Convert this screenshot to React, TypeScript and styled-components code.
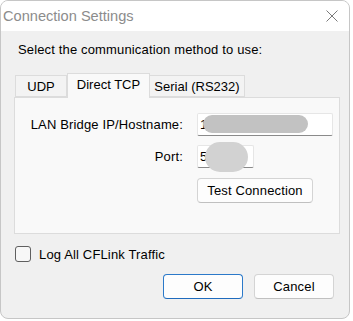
import styled, { createGlobalStyle } from 'styled-components';

const GlobalStyle = createGlobalStyle`
  html, body {
    margin: 0;
    padding: 0;
    background: #ffffff;
  }
  body {
    font-family: 'Liberation Sans', Arial, sans-serif;
    color: #000;
  }
`;

const Window = styled.div`
  width: 350px;
  height: 319px;
  box-sizing: border-box;
  border: 1px solid #c6c6c6;
  border-radius: 8px;
  overflow: hidden;
  background: #f0f0f0;
  display: flex;
  flex-direction: column;
`;

const TitleBar = styled.div`
  height: 30px;
  background: #ffffff;
  display: flex;
  align-items: center;
  justify-content: space-between;
  padding: 0 11px 0 2px;
  flex-shrink: 0;
`;

const Title = styled.span`
  font-size: 14.6px;
  color: #8c8c8c;
`;

const Body = styled.div`
  display: flex;
  flex-direction: column;
  padding: 11px 9px 0 13px;
  font-size: 13px;
  letter-spacing: 0.15px;
`;

const Prompt = styled.div`
  line-height: 16px;
  padding-left: 4px;
`;

const TabRow = styled.div`
  display: flex;
  align-items: flex-end;
  height: 24px;
  margin-top: 15px;
  padding-left: 1px;
  position: relative;
  z-index: 1;
`;

const Tab = styled.div<{ $active?: boolean; $w: number }>`
  width: ${(p) => p.$w}px;
  box-sizing: border-box;
  height: ${(p) => (p.$active ? 25 : 22)}px;
  margin-bottom: ${(p) => (p.$active ? -1 : 0)}px;
  background: ${(p) => (p.$active ? '#f9f9f9' : '#f3f3f3')};
  border: 1px solid #dcdcdc;
  border-bottom: ${(p) => (p.$active ? 'none' : '1px solid #dcdcdc')};
  ${(p) => (!p.$active ? 'border-left: none;' : '')}
  &:first-child {
    border-left: 1px solid #dcdcdc;
  }
  display: flex;
  align-items: center;
  justify-content: center;
  padding-bottom: ${(p) => (p.$active ? 3 : 0)}px;
  letter-spacing: 0;
`;

const Panel = styled.div`
  height: 137px;
  box-sizing: border-box;
  background: #f9f9f9;
  border: 1px solid #dcdcdc;
  padding: 15px 0 0 0;
  display: grid;
  grid-template-columns: 168px 1fr;
  column-gap: 14px;
  align-content: start;
`;

const Label = styled.div<{ $mt?: number }>`
  justify-self: end;
  align-self: center;
  margin-top: ${(p) => p.$mt ?? 0}px;
`;

const Field = styled.div<{ $w: number; $mt?: number }>`
  position: relative;
  width: ${(p) => p.$w}px;
  height: 23px;
  box-sizing: border-box;
  margin-top: ${(p) => p.$mt ?? 0}px;
  background: #ffffff;
  border: 1px solid #e6e6e6;
  border-bottom: 1px solid #8a8a8a;
  border-radius: 2px;
  display: flex;
  align-items: center;
  padding-left: 2px;
`;

const Redact = styled.div<{ $l: number; $t: number; $w: number; $h: number; $c: string }>`
  position: absolute;
  left: ${(p) => p.$l}px;
  top: ${(p) => p.$t}px;
  width: ${(p) => p.$w}px;
  height: ${(p) => p.$h}px;
  border-radius: ${(p) => p.$h / 2}px;
  background: ${(p) => p.$c};
  filter: blur(0.6px);
`;

const ButtonCell = styled.div`
  margin-top: 10px;
`;

const Button = styled.button<{ $primary?: boolean; $w: number }>`
  width: ${(p) => p.$w}px;
  height: 25px;
  box-sizing: border-box;
  padding: 0;
  background: #fdfdfd;
  border: 1px solid ${(p) => (p.$primary ? '#2b79c9' : '#d4d4d4')};
  border-bottom-color: ${(p) => (p.$primary ? '#1f6bbd' : '#c0c0c0')};
  border-radius: 4px;
  font-family: 'Liberation Sans', Arial, sans-serif;
  font-size: 13px;
  letter-spacing: 0.15px;
  color: #000;
`;

const CheckRow = styled.label`
  display: flex;
  align-items: center;
  gap: 8px;
  margin-top: 12px;
  padding-left: 1px;
`;

const CheckBox = styled.span`
  width: 16px;
  height: 16px;
  box-sizing: border-box;
  border: 1px solid #5f5f5f;
  border-radius: 3px;
  background: #f7f7f7;
`;

const Actions = styled.div`
  display: flex;
  justify-content: flex-end;
  gap: 11px;
  margin-top: 12px;
  padding-right: 6px;
`;

export default function App() {
  return (
    <>
      <GlobalStyle />
      <Window>
        <TitleBar>
          <Title>Connection Settings</Title>
          <svg width="12" height="12" viewBox="0 0 12 12">
            <path d="M0.5 0.5 L11.5 11.5 M11.5 0.5 L0.5 11.5" stroke="#7a7a7a" strokeWidth="1" fill="none" />
          </svg>
        </TitleBar>
        <Body>
          <Prompt>Select the communication method to use:</Prompt>
          <TabRow>
            <Tab $w={52}>UDP</Tab>
            <Tab $w={83} $active>
              Direct TCP
            </Tab>
            <Tab $w={95}>Serial (RS232)</Tab>
          </TabRow>
          <Panel>
            <Label>LAN Bridge IP/Hostname:</Label>
            <Field $w={136}>
              1
              <Redact $l={5} $t={1} $w={105} $h={18} $c="#c2c2c2" />
            </Field>
            <Label $mt={9}>Port:</Label>
            <Field $w={57} $mt={9}>
              5
              <Redact $l={7} $t={-4} $w={43} $h={30} $c="#d2d2d2" />
            </Field>
            <div />
            <ButtonCell>
              <Button $w={116}>Test Connection</Button>
            </ButtonCell>
          </Panel>
          <CheckRow>
            <CheckBox />
            Log All CFLink Traffic
          </CheckRow>
          <Actions>
            <Button $w={80} $primary>
              OK
            </Button>
            <Button $w={80}>Cancel</Button>
          </Actions>
        </Body>
      </Window>
    </>
  );
}
